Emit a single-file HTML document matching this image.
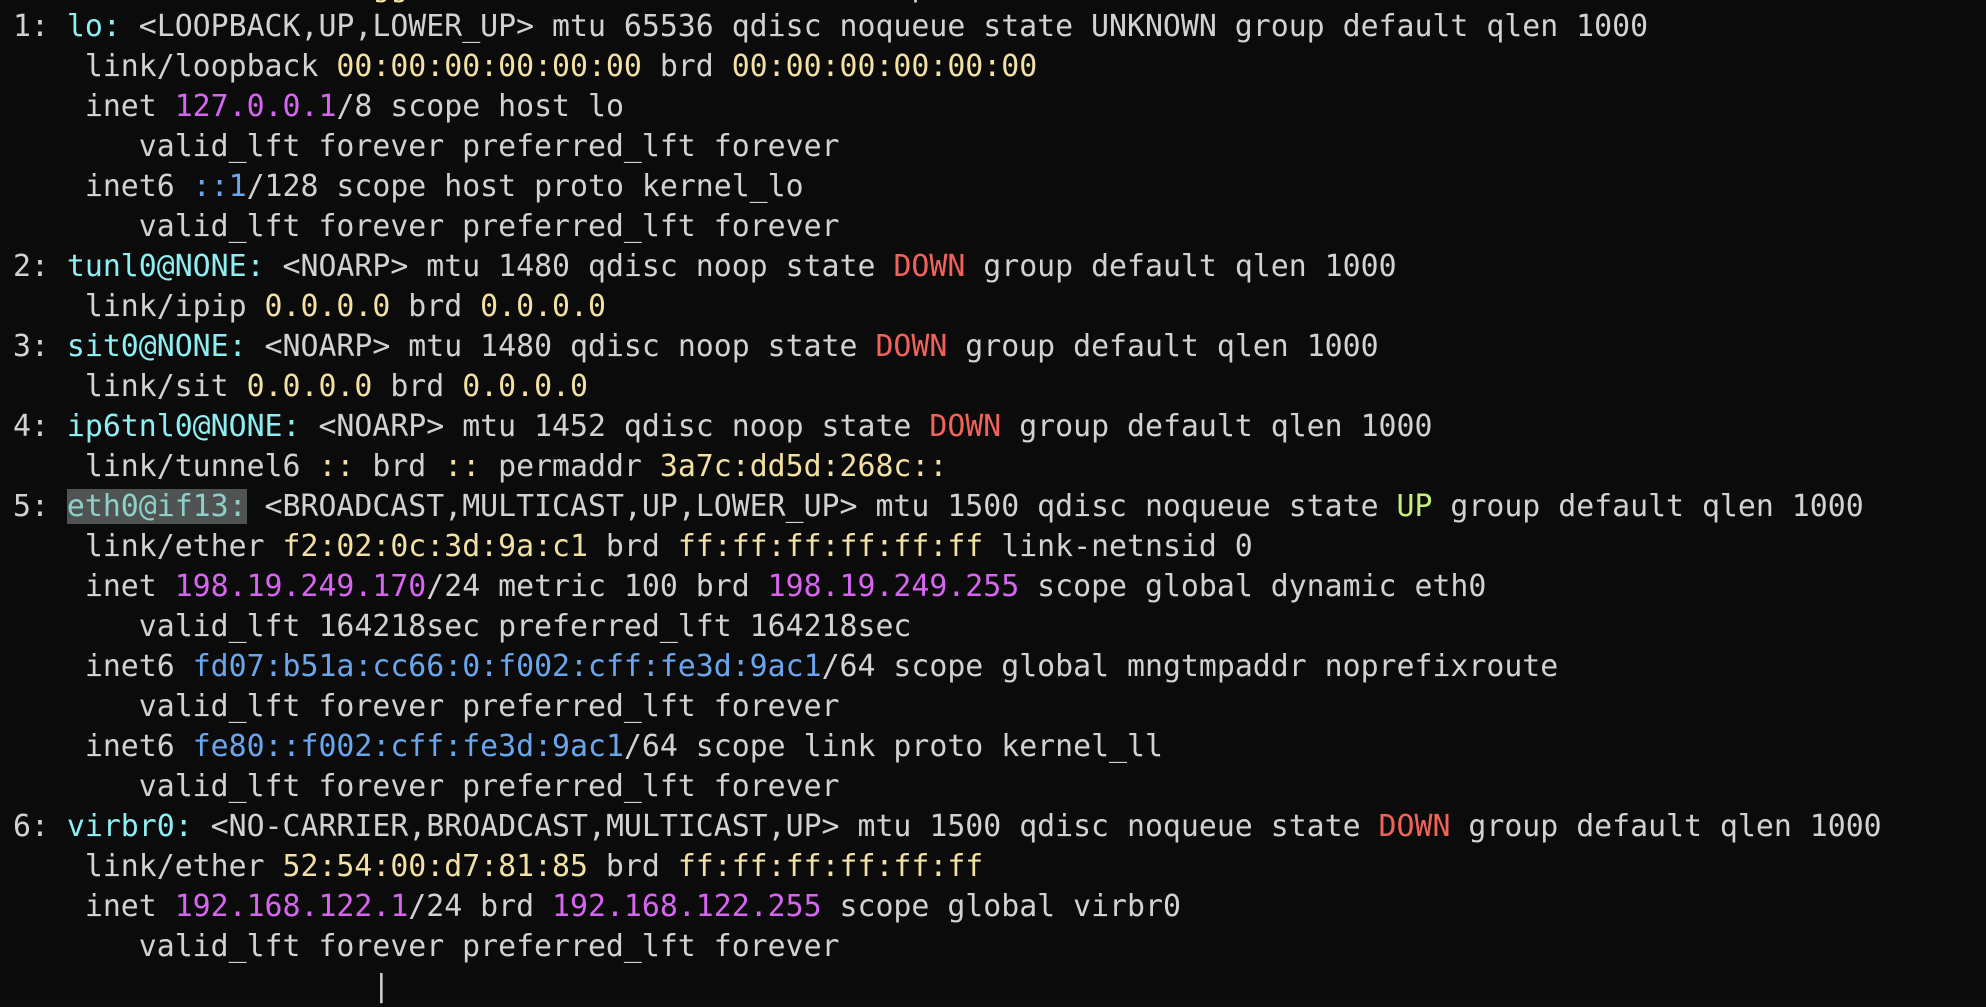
<!DOCTYPE html>
<html><head><meta charset="utf-8"><style>
html,body{margin:0;padding:0;background:#0b0b0b;width:1986px;height:970px;overflow:hidden}
pre{margin:0;position:absolute;left:13px;top:-33px;font-family:"DejaVu Sans Mono","Liberation Mono",monospace;font-size:29.85px;line-height:40px;color:#d2d2d2;white-space:pre}
.c{color:#8eeff2}.y{color:#f2e1a2}.m{color:#d765f2}.b{color:#6aa6ee}.r{color:#f1625a}.g{color:#c6ee7c}
.h{background:#4f5452;color:#8fcfca}
</style></head><body><pre><span class="y">                    gg</span>                            p
1: <span class="c">lo:</span> &lt;LOOPBACK,UP,LOWER_UP&gt; mtu 65536 qdisc noqueue state UNKNOWN group default qlen 1000
    link/loopback <span class="y">00:00:00:00:00:00</span> brd <span class="y">00:00:00:00:00:00</span>
    inet <span class="m">127.0.0.1</span>/8 scope host lo
       valid_lft forever preferred_lft forever
    inet6 <span class="b">::1</span>/128 scope host proto kernel_lo
       valid_lft forever preferred_lft forever
2: <span class="c">tunl0@NONE:</span> &lt;NOARP&gt; mtu 1480 qdisc noop state <span class="r">DOWN</span> group default qlen 1000
    link/ipip <span class="y">0.0.0.0</span> brd <span class="y">0.0.0.0</span>
3: <span class="c">sit0@NONE:</span> &lt;NOARP&gt; mtu 1480 qdisc noop state <span class="r">DOWN</span> group default qlen 1000
    link/sit <span class="y">0.0.0.0</span> brd <span class="y">0.0.0.0</span>
4: <span class="c">ip6tnl0@NONE:</span> &lt;NOARP&gt; mtu 1452 qdisc noop state <span class="r">DOWN</span> group default qlen 1000
    link/tunnel6 <span class="y">::</span> brd <span class="y">::</span> permaddr <span class="y">3a7c:dd5d:268c::</span>
5: <span class="h">eth0@if13:</span> &lt;BROADCAST,MULTICAST,UP,LOWER_UP&gt; mtu 1500 qdisc noqueue state <span class="g">UP</span> group default qlen 1000
    link/ether <span class="y">f2:02:0c:3d:9a:c1</span> brd <span class="y">ff:ff:ff:ff:ff:ff</span> link-netnsid 0
    inet <span class="m">198.19.249.170</span>/24 metric 100 brd <span class="m">198.19.249.255</span> scope global dynamic eth0
       valid_lft 164218sec preferred_lft 164218sec
    inet6 <span class="b">fd07:b51a:cc66:0:f002:cff:fe3d:9ac1</span>/64 scope global mngtmpaddr noprefixroute
       valid_lft forever preferred_lft forever
    inet6 <span class="b">fe80::f002:cff:fe3d:9ac1</span>/64 scope link proto kernel_ll
       valid_lft forever preferred_lft forever
6: <span class="c">virbr0:</span> &lt;NO-CARRIER,BROADCAST,MULTICAST,UP&gt; mtu 1500 qdisc noqueue state <span class="r">DOWN</span> group default qlen 1000
    link/ether <span class="y">52:54:00:d7:81:85</span> brd <span class="y">ff:ff:ff:ff:ff:ff</span>
    inet <span class="m">192.168.122.1</span>/24 brd <span class="m">192.168.122.255</span> scope global virbr0
       valid_lft forever preferred_lft forever
                    |</pre></body></html>
